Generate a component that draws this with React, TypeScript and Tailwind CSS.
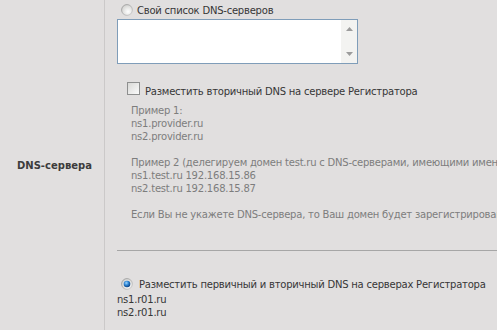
import React from "react";

function Radio({ checked }: { checked?: boolean }) {
  return (
    <svg width="12" height="12" viewBox="0 0 12 12" className="shrink-0 block">
      <defs>
        <radialGradient id={checked ? "rf1" : "rf0"} cx="0.6" cy="0.65" r="0.6">
          <stop offset="0" stopColor="#ffffff" />
          <stop offset="1" stopColor="#d6d6d4" />
        </radialGradient>
        <linearGradient id={checked ? "rs1" : "rs0"} x1="0" y1="0" x2="1" y2="1">
          <stop offset="0" stopColor="#9a9a9a" />
          <stop offset="1" stopColor="#cfcfcf" />
        </linearGradient>
        <radialGradient id="dot" cx="0.4" cy="0.35" r="0.65">
          <stop offset="0" stopColor="#9fd6ff" />
          <stop offset="0.5" stopColor="#2f86d4" />
          <stop offset="1" stopColor="#0b3f82" />
        </radialGradient>
      </defs>
      <circle cx="6" cy="6" r="5.4" fill={`url(#${checked ? "rf1" : "rf0"})`} stroke={`url(#${checked ? "rs1" : "rs0"})`} strokeWidth="1" />
      {checked && <circle cx="6" cy="6" r="3.3" fill="url(#dot)" />}
    </svg>
  );
}

function Checkbox() {
  return (
    <div className="w-[13px] h-[13px] shrink-0 border border-[#8e8f8f] bg-gradient-to-br from-[#d8d8d6] to-[#fbfbfb] p-[1px]">
      <div className="w-full h-full bg-gradient-to-br from-[#dcdcda] to-[#f8f8f8]" />
    </div>
  );
}

export default function App() {
  const lines = [
    "Пример 1:",
    "ns1.provider.ru",
    "ns2.provider.ru",
    "\u00a0",
    "Пример 2 (делегируем домен test.ru с DNS-серверами, имеющими имена ns1.test.ru и ns2.test.ru):",
    "ns1.test.ru 192.168.15.86",
    "ns2.test.ru 192.168.15.87",
    "\u00a0",
    "Если Вы не укажете DNS-сервера, то Ваш домен будет зарегистрирован без делегирования.",
  ];
  return (
    <div className="w-[497px] h-[330px] overflow-hidden bg-[#e1dfdf] flex font-['DejaVu_Sans',sans-serif] text-[10px] leading-[13px] tracking-[-0.22px] text-[#363636] whitespace-nowrap">
      <div className="w-[105px] shrink-0 border-r border-[#cbc9c9] pt-[159px] pl-[17px]">
        <div className="font-bold text-[#3c3c3c] tracking-normal">DNS-сервера</div>
      </div>
      <div className="flex-1 min-w-0 pl-[12px] flex flex-col">
        <div className="mt-[4px] pl-[4px] flex items-start gap-[4px]">
          <Radio />
          <span>Свой список DNS-серверов</span>
        </div>
        <div className="mt-[2px] w-[241px] h-[45px] border border-[#7f9db9] bg-white flex justify-end">
          <div className="w-[16px] h-full bg-[#f3f3f1] flex flex-col items-center justify-between py-[7px]">
            <svg width="7" height="4" viewBox="0 0 7 4"><path d="M0 4 L3.5 0 L7 4 Z" fill="#9c9c9c" /></svg>
            <svg width="7" height="4" viewBox="0 0 7 4"><path d="M0 0 L3.5 4 L7 0 Z" fill="#9c9c9c" /></svg>
          </div>
        </div>
        <div className="mt-[18px] ml-[10px] flex items-start gap-[5px]">
          <Checkbox />
          <span className="pt-[3px]">Разместить вторичный DNS на сервере Регистратора</span>
        </div>
        <div className="mt-[6px] ml-[14px] text-[#7d7d7d] flex flex-col">
          {lines.map((l, i) => (
            <div key={i}>{l}</div>
          ))}
        </div>
        <div className="mt-[29px] h-px bg-[#a6a6a6]" />
        <div className="mt-[27px] pl-[4px] flex items-start gap-[6px]">
          <Radio checked />
          <span>Разместить первичный и вторичный DNS на серверах Регистратора</span>
        </div>
        <div className="mt-[2px]">ns1.r01.ru</div>
        <div>ns2.r01.ru</div>
      </div>
    </div>
  );
}
